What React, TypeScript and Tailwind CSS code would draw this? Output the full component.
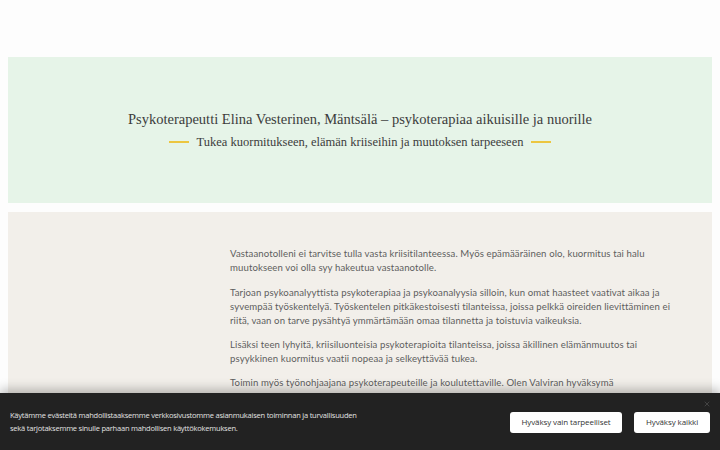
import { X } from "lucide-react";

const paragraphs = [
  [
    "Vastaanotolleni ei tarvitse tulla vasta kriisitilanteessa. Myös epämääräinen olo, kuormitus tai halu",
    "muutokseen voi olla syy hakeutua vastaanotolle.",
  ],
  [
    "Tarjoan psykoanalyyttista psykoterapiaa ja psykoanalyysia silloin, kun omat haasteet vaativat aikaa ja",
    "syvempää työskentelyä. Työskentelen pitkäkestoisesti tilanteissa, joissa pelkkä oireiden lievittäminen ei",
    "riitä, vaan on tarve pysähtyä ymmärtämään omaa tilannetta ja toistuvia vaikeuksia.",
  ],
  [
    "Lisäksi teen lyhyitä, kriisiluonteisia psykoterapioita tilanteissa, joissa äkillinen elämänmuutos tai",
    "psyykkinen kuormitus vaatii nopeaa ja selkeyttävää tukea.",
  ],
  [
    "Toimin myös työnohjaajana psykoterapeuteille ja koulutettaville. Olen Valviran hyväksymä",
    "psykoterapeutti ja työskentelen sekä lähivastaanotolla että etänä.",
  ],
];

export default function App() {
  return (
    <div className="relative h-[450px] w-[720px] overflow-hidden bg-[#fdfdfd]">
      <div className="h-[57px]" />

      <section className="mx-2 flex h-[146px] flex-col items-center justify-center bg-[#e6f4e8]">
        <h1 className="font-['Liberation_Serif',serif] text-[14.5px] leading-[22px] text-[#3c3c3c]">
          Psykoterapeutti Elina Vesterinen, Mäntsälä – psykoterapiaa aikuisille ja nuorille
        </h1>
        <div className="mt-[2px] flex items-center gap-[8px]">
          <span className="h-[2px] w-[20px] bg-[#ecc640]" />
          <h2 className="font-['Liberation_Serif',serif] text-[12.5px] leading-[20px] text-[#3c3c3c]">
            Tukea kuormitukseen, elämän kriiseihin ja muutoksen tarpeeseen
          </h2>
          <span className="h-[2px] w-[20px] bg-[#ecc640]" />
        </div>
      </section>

      <section className="mx-2 mt-[9px] h-[260px] bg-[#f2efea] pt-[35px]">
        <div className="ml-[222px] w-[440px] font-['Lato',sans-serif] text-[9.6px] leading-[14px] tracking-[0.1px] text-[#5e5e5e]">
          {paragraphs.map((lines, i) => (
            <p key={i} className={i === 0 ? "mb-[11px]" : "mb-[10px]"}>
              {lines.map((l, j) => (
                <span key={j} className="block whitespace-nowrap">
                  {l}
                </span>
              ))}
            </p>
          ))}
        </div>
      </section>

      <div className="absolute inset-x-0 bottom-0 flex h-[57px] items-center justify-between bg-[#222222] px-[10px] pt-[1px] shadow-[0_-4px_10px_rgba(0,0,0,0.25)]">
        <p className="font-['Open_Sans',sans-serif] text-[7.5px] leading-[13px] tracking-[-0.22px] text-[#e2e2e2]">
          <span className="block whitespace-nowrap">
            Käytämme evästeitä mahdollistaaksemme verkkosivustomme asianmukaisen toiminnan ja turvallisuuden
          </span>
          <span className="block whitespace-nowrap">
            sekä tarjotaksemme sinulle parhaan mahdollisen käyttökokemuksen.
          </span>
        </p>
        <div className="flex items-center gap-[12px]">
          <button className="h-[21px] w-[112px] rounded-[3px] bg-white font-['Open_Sans',sans-serif] text-[8px] tracking-[-0.1px] text-[#333]">
            Hyväksy vain tarpeelliset
          </button>
          <button className="h-[21px] w-[76px] rounded-[3px] bg-white font-['Open_Sans',sans-serif] text-[8px] tracking-[-0.1px] text-[#333]">
            Hyväksy kaikki
          </button>
        </div>
        <X className="absolute right-[9px] top-[7px] h-[8px] w-[8px] text-[#555]" strokeWidth={2} />
      </div>
    </div>
  );
}
